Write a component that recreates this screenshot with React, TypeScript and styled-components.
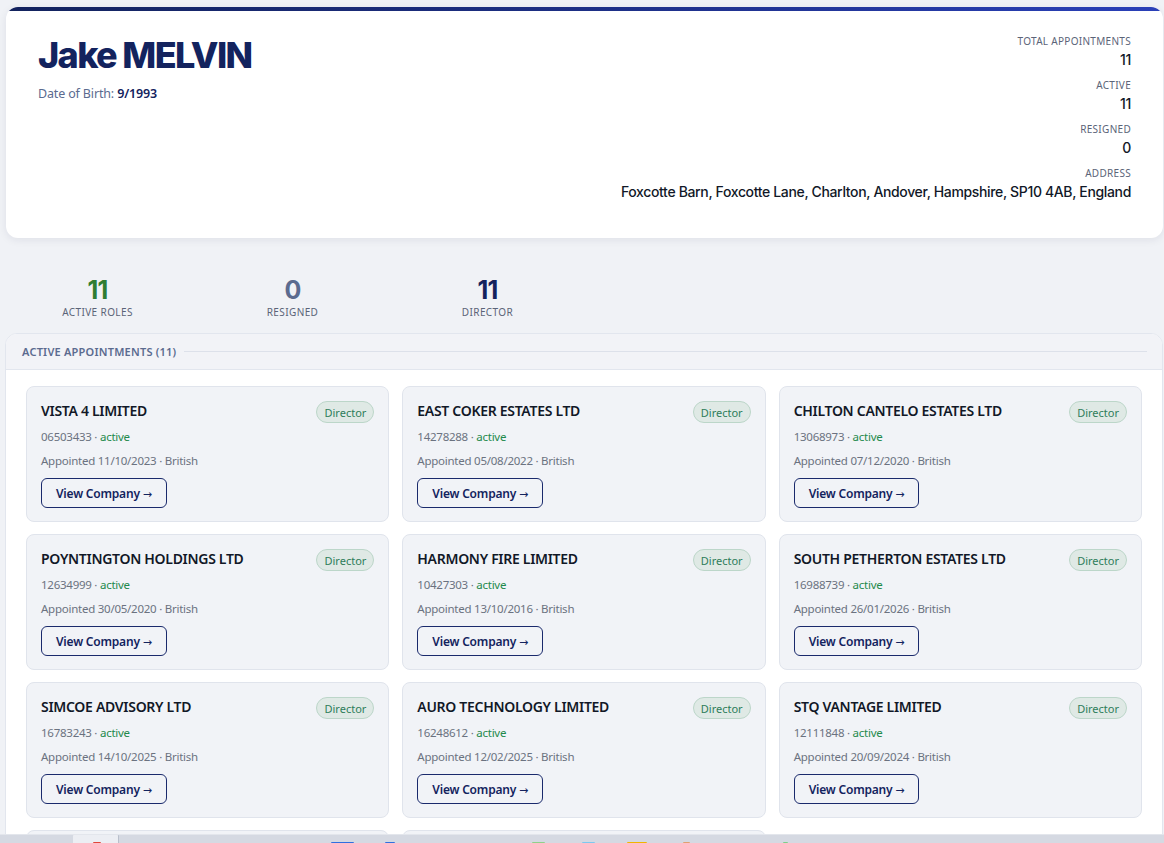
import React from "react";
import styled, { createGlobalStyle } from "styled-components";

const GlobalStyle = createGlobalStyle`
  html, body { margin: 0; padding: 0; }
  body {
    background: #f0f2f6;
    font-family: "Noto Sans", "Open Sans", Arial, sans-serif;
    color: #111827;
  }
  * { box-sizing: border-box; }
`;

const Page = styled.div`
  padding: 7px 1px 40px 6px;
`;

const HeaderCard = styled.section`
  background: #ffffff;
  border-radius: 12px;
  overflow: hidden;
  box-shadow: 0 2px 8px rgba(20, 30, 70, 0.08);
  display: flex;
  flex-direction: column;
`;

const TopBar = styled.div`
  height: 4px;
  background: linear-gradient(90deg, #13235e 0%, #1d2f85 50%, #2a40b8 100%);
`;

const HeaderBody = styled.div`
  display: flex;
  justify-content: space-between;
  align-items: flex-start;
  padding: 23px 32px 36px 32px;
`;

const Identity = styled.div`
  display: flex;
  flex-direction: column;
`;

const Name = styled.h1`
  margin: 0;
  font-family: Inter, "Noto Sans", sans-serif;
  font-weight: 800;
  font-size: 36px;
  line-height: 42px;
  letter-spacing: -0.045em;
  color: #13235e;
`;

const Dob = styled.div`
  margin-top: 9px;
  font-size: 12.5px;
  line-height: 18px;
  letter-spacing: -0.15px;
  color: #5b6b8f;
  b {
    font-weight: 600;
    color: #13235e;
  }
`;

const Facts = styled.dl`
  margin: 0;
  display: flex;
  flex-direction: column;
  align-items: flex-end;
  gap: 8px;
  text-align: right;
`;

const Fact = styled.div`
  display: flex;
  flex-direction: column;
  align-items: flex-end;
`;

const FactLabel = styled.dt`
  font-size: 10px;
  line-height: 14px;
  letter-spacing: 0.03em;
  text-transform: uppercase;
  color: #5b6478;
`;

const FactValue = styled.dd`
  margin: 2px 0 0 0;
  font-family: Inter, "Noto Sans", sans-serif;
  font-size: 14px;
  line-height: 20px;
  font-weight: 500;
  letter-spacing: -0.025em;
  color: #111827;
`;

const StatsRow = styled.div`
  display: grid;
  grid-template-columns: repeat(3, 195px);
  margin: 38px 0 14px -6px;
`;

const Stat = styled.div`
  display: flex;
  flex-direction: column;
  align-items: center;
`;

const StatNumber = styled.div<{ $color: string }>`
  font-family: Inter, "Noto Sans", sans-serif;
  font-size: 25px;
  line-height: 29px;
  font-weight: 700;
  letter-spacing: -0.03em;
  color: ${(p) => p.$color};
`;

const StatLabel = styled.div`
  font-size: 10px;
  line-height: 14px;
  letter-spacing: 0.04em;
  text-transform: uppercase;
  color: #5b6478;
`;

const Section = styled.section`
  margin-left: -1px;
  background: #ffffff;
  border: 1px solid #e2e6ee;
  border-radius: 12px 12px 0 0;
  overflow: hidden;
`;

const SectionHead = styled.div`
  height: 36px;
  display: flex;
  align-items: center;
  gap: 8px;
  padding: 0 15px 0 16px;
  background: #f2f3f7;
  border-bottom: 1px solid #e2e6ee;
`;

const SectionTitle = styled.h2`
  margin: 0;
  font-size: 11px;
  font-weight: 600;
  letter-spacing: 0.02em;
  text-transform: uppercase;
  color: #5b6b8f;
  white-space: nowrap;
`;

const Rule = styled.div`
  flex: 1;
  height: 1px;
  background: #dde1ea;
`;

const Grid = styled.div`
  display: grid;
  grid-template-columns: repeat(3, 1fr);
  column-gap: 13px;
  row-gap: 12px;
  padding: 16px 20px 20px 20px;
`;

const Card = styled.article`
  background: #f1f3f7;
  border: 1px solid #e0e4ec;
  border-radius: 8px;
  padding: 14px 14px 13px 14px;
  display: flex;
  flex-direction: column;
`;

const CardTop = styled.div`
  display: flex;
  justify-content: space-between;
  align-items: flex-start;
  gap: 8px;
`;

const CardTitle = styled.h3`
  margin: 0;
  font-size: 14px;
  line-height: 20px;
  font-weight: 600;
  letter-spacing: -0.3px;
  color: #111827;
`;

const Badge = styled.span`
  flex-shrink: 0;
  height: 22px;
  padding: 0 7px;
  display: inline-flex;
  align-items: center;
  border-radius: 11px;
  background: #dfe9e5;
  border: 1px solid #bcd6c9;
  font-size: 11px;
  color: #2e7d5a;
`;

const Meta = styled.div<{ $gap: number }>`
  margin-top: ${(p) => p.$gap}px;
  font-size: 11.5px;
  line-height: 18px;
  letter-spacing: -0.25px;
  color: #6b7280;
`;

const Active = styled.span`
  color: #1f8a4c;
`;

const ViewButton = styled.button`
  margin-top: 8px;
  align-self: flex-start;
  height: 30px;
  padding: 0 14px;
  border: 1.5px solid #1a2a6c;
  border-radius: 6px;
  background: transparent;
  font-family: "Noto Sans", "Open Sans", Arial, sans-serif;
  font-size: 12px;
  font-weight: 600;
  letter-spacing: -0.2px;
  color: #13235e;
  cursor: pointer;
`;

const Arrow = styled.span`
  font-family: "DejaVu Sans", sans-serif;
  font-size: 11px;
  font-weight: 400;
`;

const Taskbar = styled.div`
  position: fixed;
  left: 0;
  right: 0;
  bottom: 0;
  height: 9px;
  background: #d5d9e2;
  border-top: 1px solid #e3e6ec;
`;

const TaskItem = styled.span<{ $left: number; $w: number; $color: string; $h?: number }>`
  position: absolute;
  left: ${(p) => p.$left}px;
  top: ${(p) => (p.$h ? 0 : 7)}px;
  width: ${(p) => p.$w}px;
  height: ${(p) => p.$h ?? 2}px;
  background: ${(p) => p.$color};
  border-radius: 1px;
`;

type Appt = { name: string; num: string; date: string };

const appts: Appt[] = [
  { name: "VISTA 4 LIMITED", num: "06503433", date: "11/10/2023" },
  { name: "EAST COKER ESTATES LTD", num: "14278288", date: "05/08/2022" },
  { name: "CHILTON CANTELO ESTATES LTD", num: "13068973", date: "07/12/2020" },
  { name: "POYNTINGTON HOLDINGS LTD", num: "12634999", date: "30/05/2020" },
  { name: "HARMONY FIRE LIMITED", num: "10427303", date: "13/10/2016" },
  { name: "SOUTH PETHERTON ESTATES LTD", num: "16988739", date: "26/01/2026" },
  { name: "SIMCOE ADVISORY LTD", num: "16783243", date: "14/10/2025" },
  { name: "AURO TECHNOLOGY LIMITED", num: "16248612", date: "12/02/2025" },
  { name: "STQ VANTAGE LIMITED", num: "12111848", date: "20/09/2024" },
  { name: "PEN MILL ESTATES LTD", num: "15520417", date: "03/03/2024" },
  { name: "FOXCOTTE CAPITAL LTD", num: "14903326", date: "18/11/2023" },
];

export default function App() {
  return (
    <>
      <GlobalStyle />
      <Page>
        <HeaderCard>
          <TopBar />
          <HeaderBody>
            <Identity>
              <Name>Jake MELVIN</Name>
              <Dob>
                Date of Birth: <b>9/1993</b>
              </Dob>
            </Identity>
            <Facts>
              <Fact>
                <FactLabel>Total Appointments</FactLabel>
                <FactValue>11</FactValue>
              </Fact>
              <Fact>
                <FactLabel>Active</FactLabel>
                <FactValue>11</FactValue>
              </Fact>
              <Fact>
                <FactLabel>Resigned</FactLabel>
                <FactValue>0</FactValue>
              </Fact>
              <Fact>
                <FactLabel>Address</FactLabel>
                <FactValue>
                  Foxcotte Barn, Foxcotte Lane, Charlton, Andover, Hampshire, SP10 4AB, England
                </FactValue>
              </Fact>
            </Facts>
          </HeaderBody>
        </HeaderCard>

        <StatsRow>
          <Stat>
            <StatNumber $color="#2f7d32">11</StatNumber>
            <StatLabel>Active Roles</StatLabel>
          </Stat>
          <Stat>
            <StatNumber $color="#5b6b8f">0</StatNumber>
            <StatLabel>Resigned</StatLabel>
          </Stat>
          <Stat>
            <StatNumber $color="#13235e">11</StatNumber>
            <StatLabel>Director</StatLabel>
          </Stat>
        </StatsRow>

        <Section>
          <SectionHead>
            <SectionTitle>Active Appointments (11)</SectionTitle>
            <Rule />
          </SectionHead>
          <Grid>
            {appts.map((a) => (
              <Card key={a.num}>
                <CardTop>
                  <CardTitle>{a.name}</CardTitle>
                  <Badge>Director</Badge>
                </CardTop>
                <Meta $gap={5}>
                  {a.num} · <Active>active</Active>
                </Meta>
                <Meta $gap={6}>Appointed {a.date} · British</Meta>
                <ViewButton>
                  View Company <Arrow>→</Arrow>
                </ViewButton>
              </Card>
            ))}
          </Grid>
        </Section>
      </Page>
      <Taskbar>
        <TaskItem $left={73} $w={45} $color="#eceef3" $h={9} />
        <TaskItem $left={93} $w={8} $color="#e0463a" />
        <TaskItem $left={118} $w={1} $color="#b9bfcb" $h={9} />
        <TaskItem $left={331} $w={23} $color="#2f6fe0" />
        <TaskItem $left={385} $w={10} $color="#2f6fe0" />
        <TaskItem $left={532} $w={13} $color="#8fd18a" />
        <TaskItem $left={582} $w={13} $color="#7cc8f0" />
        <TaskItem $left={627} $w={20} $color="#f2b400" />
        <TaskItem $left={683} $w={7} $color="#e0a070" />
        <TaskItem $left={783} $w={5} $color="#7ccf8a" />
      </Taskbar>
    </>
  );
}
